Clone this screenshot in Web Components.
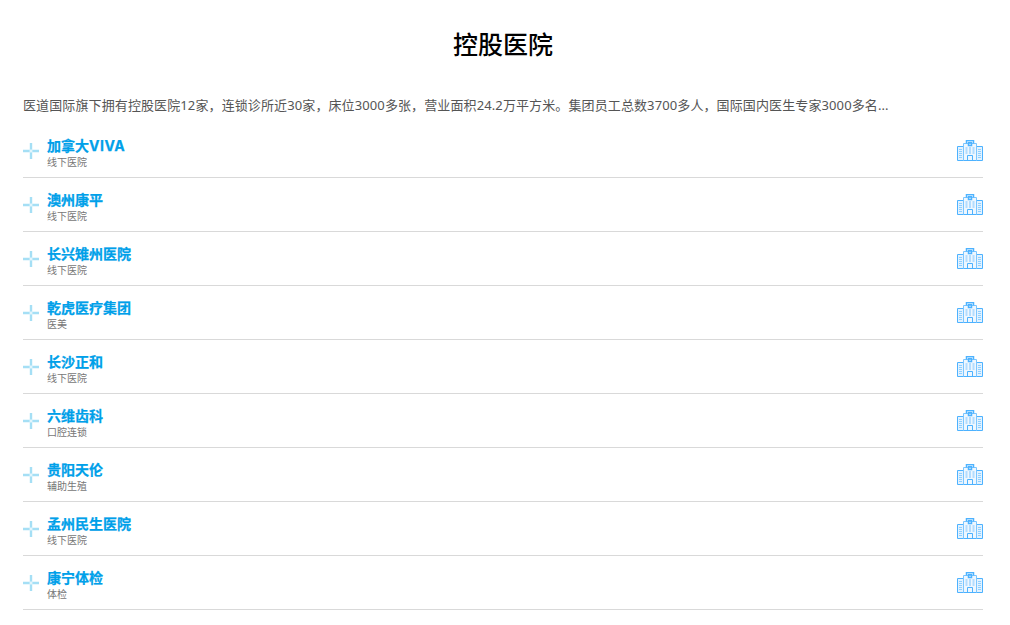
<!DOCTYPE html>
<html lang="zh">
<head>
<meta charset="utf-8">
<title>控股医院</title>
<style>
  html, body { margin: 0; background: #fff; }
  body { font-family: "Noto Sans", "Noto Sans CJK SC", sans-serif; }
  .latin { letter-spacing: .5px; }
</style>
</head>
<body>
<hospital-section heading="控股医院">
  <span slot="intro">医道国际旗下拥有控股医院12家，连锁诊所近30家，床位3000多张，营业面积24.2万平方米。集团员工总数3700多人，国际国内医生专家3000多名...</span>
  <hospital-row kind="线下医院">加拿大<span class="latin">VIVA</span></hospital-row>
  <hospital-row kind="线下医院">澳州康平</hospital-row>
  <hospital-row kind="线下医院">长兴雉州医院</hospital-row>
  <hospital-row kind="医美">乾虎医疗集团</hospital-row>
  <hospital-row kind="线下医院">长沙正和</hospital-row>
  <hospital-row kind="口腔连锁">六维齿科</hospital-row>
  <hospital-row kind="辅助生殖">贵阳天伦</hospital-row>
  <hospital-row kind="线下医院">孟州民生医院</hospital-row>
  <hospital-row kind="体检">康宁体检</hospital-row>
</hospital-section>

<script>
class HospitalSection extends HTMLElement {
  constructor() {
    super();
    this.attachShadow({ mode: 'open' });
    this.shadowRoot.innerHTML = `
      <style>
        :host { display: block; width: 960px; margin-left: 23px; }
        h2 {
          margin: 0;
          padding-top: 27px;
          height: 57px;
          font-size: 25px;
          line-height: 34px;
          font-weight: 500;
          color: #000;
          text-align: center;
        }
        .intro {
          margin-top: 10px;
          height: 30px;
          font-size: 13px;
          line-height: 22px;
          letter-spacing: .11px;
          color: #555;
          white-space: nowrap;
        }
      </style>
      <h2></h2>
      <div class="intro"><slot name="intro"></slot></div>
      <slot></slot>
    `;
    this.shadowRoot.querySelector('h2').textContent = this.getAttribute('heading');
  }
}
customElements.define('hospital-section', HospitalSection);

class HospitalRow extends HTMLElement {
  constructor() {
    super();
    this.attachShadow({ mode: 'open' });
    this.shadowRoot.innerHTML = `
      <style>
        :host {
          display: flex;
          align-items: center;
          height: 53px;
          border-bottom: 1px solid #d9d9d9;
        }
        .plus { width: 16px; height: 16px; margin-right: 8px; flex: none; display: block; margin-top: 1px; }
        .text { flex: 1; padding-top: 4px; }
        .name {
          font-size: 14px;
          line-height: 18px;
          font-weight: 700;
          color: #00a0e9;
          font-family: "Inter", "Noto Sans CJK SC", sans-serif;
          -webkit-text-stroke: .25px #00a0e9;
        }
        .kind { font-size: 10px; line-height: 14px; color: #777; }
        .icon { width: 26px; height: 21px; flex: none; display: block; }
      </style>
      <svg class="plus" viewBox="0 0 16 16">
        <path d="M8 0v6.800M8 9.200v6.800M0 8h6.800M9.200 8h6.800" stroke="#a5dff5" stroke-width="2.400" fill="none"/>
        <rect x="6.800" y="6.800" width="2.400" height="2.400" fill="#e2f5fc"/>
      </svg>
      <div class="text">
        <div class="name"><slot></slot></div>
        <div class="kind"></div>
      </div>
      <svg class="icon" viewBox="0 0 26 21" fill="none" stroke="#4db2ff" stroke-width="1">
        <path d="M1 7h5v13H1zM20 7h5v13h-5z" fill="#e3f2ff" stroke="none"/>
        <path d="M7 4h12v16H7z" fill="#eef7ff" stroke="none"/>
        <path d="M6.500 20.500H.5V6.500h6M19.500 20.500h6V6.500h-6" />
        <path d="M6.500 20.500V3.500h13v17" stroke="#7cc6ff"/>
        <path d="M6.500 20.500h13" />
        <path d="M9.500 3.500V.5h7v3" stroke-width="1.500"/>
        <path d="M11.500 2.500h3v3h-3z" stroke-width="1.500"/>
        <path d="M10.500 20.500v-5h5v5" />
        <path d="M2 9.500h3M2 11.500h3M2 13.500h3M2 15.500h3M2 17.500h3M21 9.500h3M21 11.500h3M21 13.500h3M21 15.500h3M21 17.500h3" stroke="#8fd0ff"/>
        <path d="M9.500 7v7M13 7v7M16.500 7v7" stroke="#b3ddff" stroke-width="2"/>
      </svg>
    `;
    this.shadowRoot.querySelector('.kind').textContent = this.getAttribute('kind');
  }
}
customElements.define('hospital-row', HospitalRow);
</script>
</body>
</html>
